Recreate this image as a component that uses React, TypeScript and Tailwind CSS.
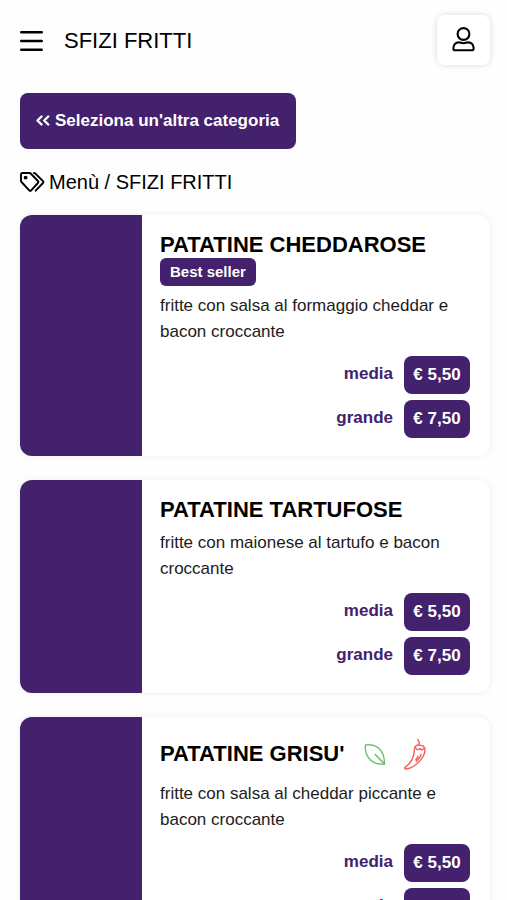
import React from "react";

type Tag = "vegetarian" | "spicy";

interface Price {
  label: string;
  value: string;
}

interface Dish {
  name: string;
  description: string;
  bestSeller?: boolean;
  tags?: Tag[];
  prices: Price[];
}

const PRICES: Price[] = [
  { label: "media", value: "€ 5,50" },
  { label: "grande", value: "€ 7,50" },
];

const DISHES: Dish[] = [
  {
    name: "PATATINE CHEDDAROSE",
    description: "fritte con salsa al formaggio cheddar e bacon croccante",
    bestSeller: true,
    prices: PRICES,
  },
  {
    name: "PATATINE TARTUFOSE",
    description: "fritte con maionese al tartufo e bacon croccante",
    prices: PRICES,
  },
  {
    name: "PATATINE GRISU'",
    description: "fritte con salsa al cheddar piccante e bacon croccante",
    tags: ["vegetarian", "spicy"],
    prices: PRICES,
  },
];

function BarsIcon() {
  return (
    <svg width="24" height="22" viewBox="0 0 24 22" stroke="currentColor" strokeWidth="2.6" strokeLinecap="round" aria-hidden="true">
      <path d="M1.300 2.300h20.400M1.300 11h20.400M1.300 19.700h20.400" />
    </svg>
  );
}

function UserIcon() {
  return (
    <svg width="24" height="26" viewBox="0 0 24 26" fill="none" stroke="currentColor" strokeWidth="2.100" strokeLinejoin="round" aria-hidden="true">
      <circle cx="11.500" cy="7" r="5.900" />
      <path d="M7 15.400c1.700 0 2.400.8 4.500.8s2.800-.8 4.500-.8c3.500 0 5.600 2.500 5.600 5.600v.9c0 .9-.6 1.400-1.400 1.400H2.800c-.8 0-1.400-.5-1.400-1.400V21c0-3.100 2.100-5.600 5.600-5.600Z" />
    </svg>
  );
}

function DoubleLeftIcon() {
  return (
    <svg width="14" height="12" viewBox="0 0 14 12" fill="none" stroke="currentColor" strokeWidth="2.400" strokeLinecap="round" strokeLinejoin="round" aria-hidden="true">
      <path d="M5.500 1.500 1.500 5.500l4 4M12.200 1.500 8.200 5.500l4 4" />
    </svg>
  );
}

function TagsIcon() {
  return (
    <svg width="25" height="20" viewBox="0 0 25 20" fill="none" stroke="currentColor" strokeWidth="1.900" strokeLinecap="round" strokeLinejoin="round" aria-hidden="true">
      <path d="M1 2.200V8.800c0 .5.200.9.500 1.200l7.700 8.300c.6.6 1.400.6 2 0l6.700-7.300c.6-.6.600-1.400 0-2L10.700 1.500C10.400 1.200 10 1 9.500 1H2.200C1.500 1 1 1.500 1 2.200Z" />
      <path d="M14 1h.2c.4 0 .8.200 1.100.5l7.700 7.600c.5.500.5 1.300 0 1.900l-7.300 7.700" />
      <circle cx="5.600" cy="5.600" r="1" fill="currentColor" />
    </svg>
  );
}

function LeafIcon() {
  return (
    <svg width="32" height="32" viewBox="0 0 32 32" fill="none" stroke="#6fc06d" strokeWidth="1.400" strokeLinecap="round" strokeLinejoin="round" role="img" aria-label="Vegetariano">
      <path d="M6.400 7c4.100-.6 9.100.100 13.100 3.100 5 4 6.100 9.200 6 16-5.900.3-10.700-.8-14-4.100C7.400 18 5.900 12.500 6.400 7Z" />
      <path d="m16.300 16.500 9 9.400" strokeWidth="1.600" />
    </svg>
  );
}

function ChiliIcon() {
  return (
    <svg width="32" height="32" viewBox="0 0 32 32" fill="none" stroke="#f0605d" strokeWidth="1.400" strokeLinecap="round" strokeLinejoin="round" role="img" aria-label="Piccante">
      <path d="M18.800 1.500c1.500 1.700 1.800 3.400 1.400 5.700" />
      <path d="M15.900 9c.9-1.500 2.500-2.100 4.300-1.900 2.300 0 4.800 1 5.600 3 .9 4.700-2 9.800-6.300 14.200-3.200 3.200-8 6-11.800 6.700-1.900.3-2.700-1.100-1.100-2.200 3.800-2.700 6.400-6.300 7.800-10.600 1-3 .7-6.600 1.500-9.200Z" />
      <path d="m16.100 9.300 2.200 2.600 2.700-1.300 2.200 1.500 2-2M22.100 16.500c-.7 2.600-2.500 4.800-4.500 6.700M19 18.300c-.5 1.500-1.300 2.500-2.300 3.600" />
    </svg>
  );
}

function DishCard({ dish }: { dish: Dish }) {
  return (
    <article className="flex overflow-hidden rounded-xl bg-white shadow-[0_0_6px_rgba(0,0,0,0.07)]">
      <div className="w-[122px] shrink-0 bg-[#43216d]" />
      <div className="min-w-0 flex-1 pt-[17px] pr-5 pb-[18px] pl-[18px]">
        <div className={dish.tags ? "flex h-10 items-center" : "flex"}>
          <h2 className="text-[22px] leading-[26px] font-bold">{dish.name}</h2>
          {dish.tags && (
            <div className="ml-[14px] flex gap-2">
              {dish.tags.map((tag) => (tag === "spicy" ? <ChiliIcon key={tag} /> : <LeafIcon key={tag} />))}
            </div>
          )}
        </div>
        {dish.bestSeller && (
          <span className="block w-fit rounded-md bg-[#43216d] px-[10px] text-[15px] leading-[28px] font-bold text-white">
            Best seller
          </span>
        )}
        <p className="pt-[7px] text-[17px] leading-[26px] text-[#1c1c1c]">{dish.description}</p>
        <dl className="mt-[11px] flex flex-col gap-[6px]">
          {dish.prices.map((price) => (
            <div key={price.label} className="flex justify-end gap-[11px] text-[17px] font-bold">
              <dt className="leading-[36px] text-[#43216d]">{price.label}</dt>
              <dd className="min-w-[66px] rounded-lg bg-[#43216d] px-[9px] text-center leading-[38px] text-white">
                {price.value}
              </dd>
            </div>
          ))}
        </dl>
      </div>
    </article>
  );
}

export default function App() {
  return (
    <div className="min-h-screen bg-[#fefefe] pr-[17px] pb-6 pl-5 font-['Liberation_Sans',Arial,sans-serif] text-black">
      <header className="flex h-20 items-center">
        <button type="button" aria-label="Apri menu" className="mt-px">
          <BarsIcon />
        </button>
        <h1 className="ml-5 flex-1 text-[22px]">SFIZI FRITTI</h1>
        <button
          type="button"
          aria-label="Profilo"
          className="flex h-[50px] w-[53px] items-center justify-center rounded-lg bg-white shadow-[0_0_6px_rgba(0,0,0,0.15)]"
        >
          <UserIcon />
        </button>
      </header>
      <main>
        <a
          href="#categorie"
          className="mt-[13px] flex h-14 w-fit items-center gap-[5px] rounded-lg bg-[#43216d] pr-[17px] pl-4 text-[17px] font-bold text-white"
        >
          <DoubleLeftIcon />
          Seleziona un'altra categoria
        </a>
        <nav aria-label="Percorso" className="mt-[18px] flex items-center gap-1 text-[20px] leading-[30px]">
          <TagsIcon />
          <span>
            <a href="#menu">Menù</a> / SFIZI FRITTI
          </span>
        </nav>
        <div className="mt-[18px] flex flex-col gap-6">
          {DISHES.map((dish) => (
            <DishCard key={dish.name} dish={dish} />
          ))}
        </div>
      </main>
    </div>
  );
}
